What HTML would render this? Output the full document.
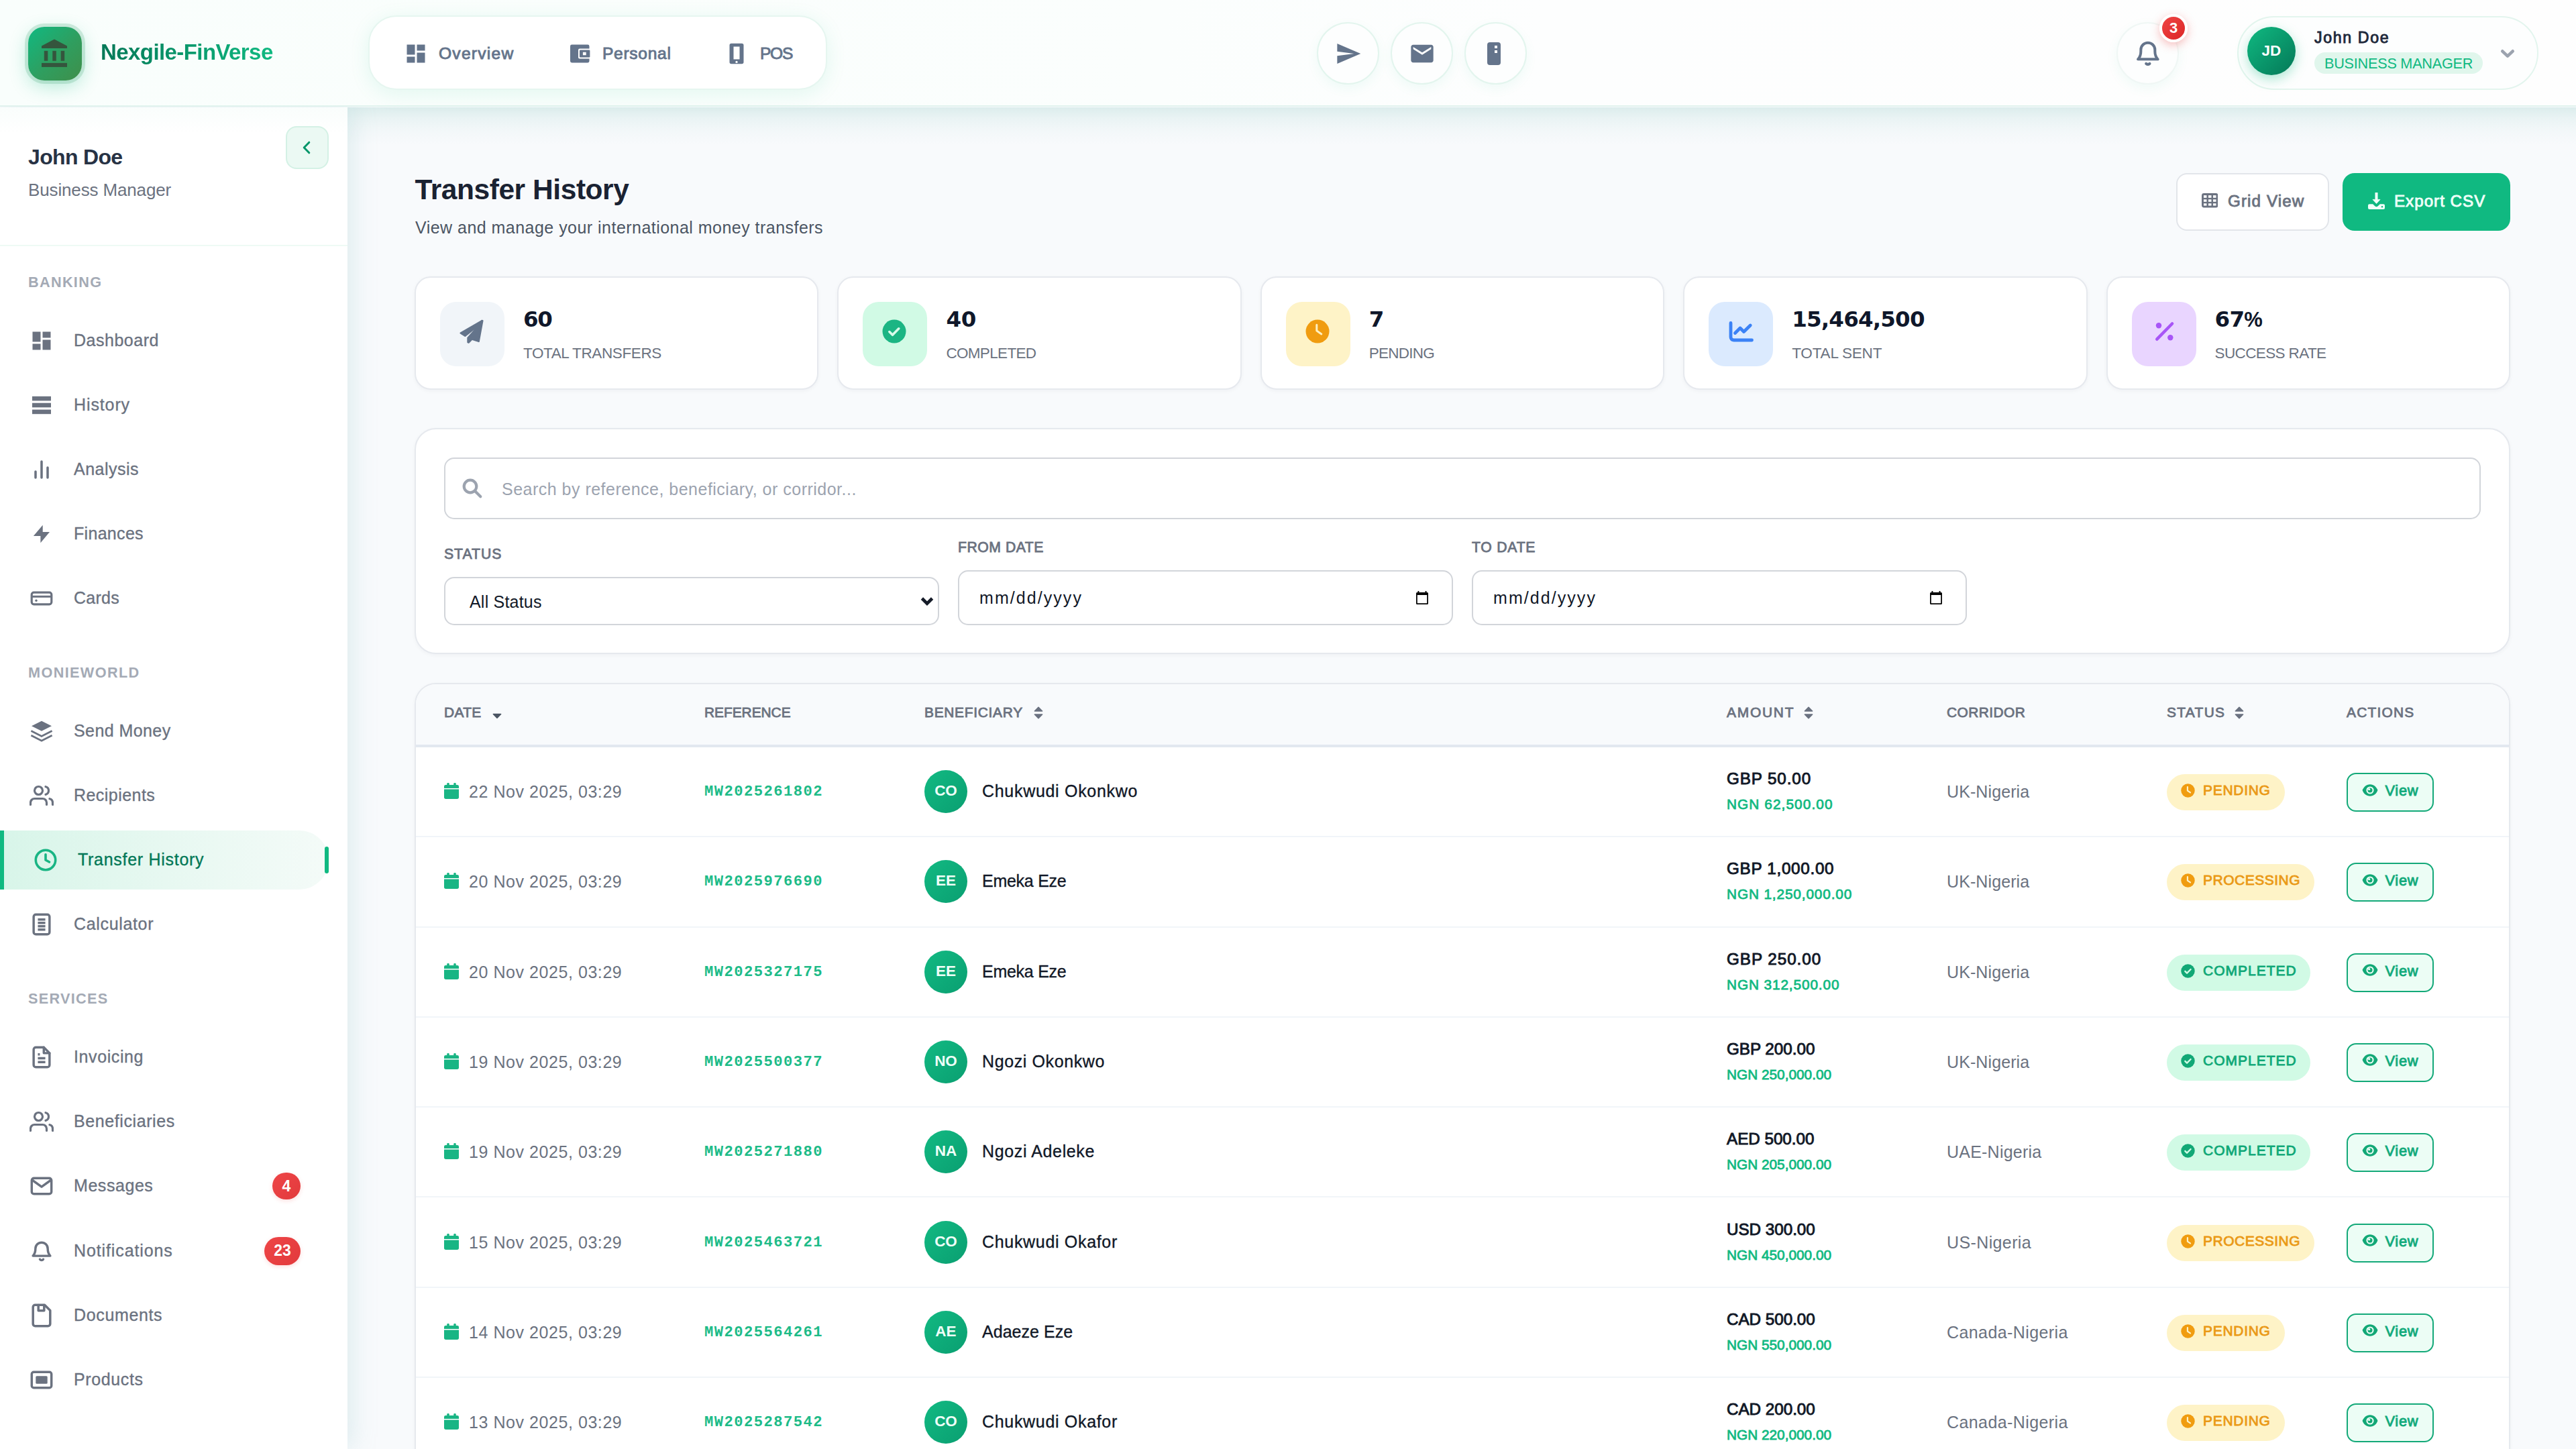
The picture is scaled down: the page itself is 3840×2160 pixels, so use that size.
<!DOCTYPE html>
<html lang="en">
<head>
<meta charset="utf-8">
<title>Transfer History - Nexgile-FinVerse</title>
<style>
*{box-sizing:border-box;margin:0;padding:0}
html,body{width:3840px;height:2160px;overflow:hidden}
body{font-family:"Liberation Sans",sans-serif;background:#f8fafc;color:#111827;position:relative}
svg{display:block}
.abs{position:absolute}
/* ---------- header ---------- */
#hdr{position:absolute;left:0;top:0;width:3840px;height:159px;background:linear-gradient(90deg,#f9fefc 0%,#fbfefd 45%,#fdfefe 60%,#fefefe 100%);border-bottom:2px solid #e1f3ee;z-index:5}
#hsh{position:absolute;left:518px;top:160px;width:3322px;height:56px;background:linear-gradient(180deg,rgba(120,190,180,.22) 0%,rgba(120,190,180,.11) 30%,rgba(120,190,180,.04) 65%,rgba(120,190,180,0) 100%);z-index:1}
#logo{position:absolute;left:42px;top:40px;width:80px;height:80px;border-radius:24px;background:linear-gradient(135deg,#10b981 0%,#2f9e5f 55%,#3f8f4a 100%);box-shadow:0 0 0 5px rgba(60,160,110,.20),0 8px 28px rgba(16,185,129,.30)}
#brand{position:absolute;left:150px;top:56px;font-weight:700;font-size:33px;line-height:44px;white-space:nowrap;background:linear-gradient(90deg,#047857,#10b981);-webkit-background-clip:text;background-clip:text;color:transparent}
#pill{position:absolute;left:549px;top:23px;width:684px;height:111px;border-radius:42px;background:#fff;border:2px solid #e6f6f0;box-shadow:0 6px 30px rgba(16,185,129,.10)}
.tn{position:absolute;top:1px;height:107px;display:flex;align-items:center;font-weight:400;-webkit-text-stroke:.9px currentColor;font-size:24.6px;color:#64748b;white-space:nowrap}
.hc{position:absolute;top:33px;width:93px;height:93px;border-radius:50%;background:#fdfefe;border:2px solid #e3f5ee;box-shadow:0 6px 18px rgba(16,185,129,.06)}
.hc svg{position:absolute}
#upill{position:absolute;left:3335px;top:24px;width:449px;height:110px;border-radius:55px;background:#fdfefe;border:2px solid #e3f5ee}
#uav{position:absolute;left:3350px;top:40px;width:72px;height:72px;border-radius:50%;background:linear-gradient(135deg,#10b981,#047857);box-shadow:0 6px 18px rgba(16,185,129,.35);color:#fff;font-weight:700;font-size:22.5px;display:flex;align-items:center;justify-content:center}
#uname{position:absolute;left:3450px;top:39px;font-size:23.2px;line-height:34px;font-weight:400;-webkit-text-stroke:.9px currentColor;color:#1e293b;white-space:nowrap}
#urole{position:absolute;left:3450px;top:78px;height:32px;border-radius:16px;background:#e0f6ec;color:#10b981;font-size:21.7px;line-height:33.5px;padding:0 15px;white-space:nowrap}
/* ---------- sidebar ---------- */
#side{position:absolute;left:0;top:160px;width:518px;height:2000px;background:#fff;z-index:3;box-shadow:4px 0 36px rgba(130,190,195,.26)}
#side:before{content:"";position:absolute;left:0;top:0;width:100%;height:40px;background:linear-gradient(180deg,rgba(16,185,129,.025),rgba(255,255,255,0))}
#sname{position:absolute;left:42px;top:54px;font-size:32px;line-height:40px;font-weight:700;color:#273244;white-space:nowrap}
#srole{position:absolute;left:42px;top:106px;font-size:26px;line-height:34px;color:#6b7280;white-space:nowrap}
#coll{position:absolute;left:426px;top:28px;width:64px;height:64px;border-radius:16px;background:#ebf9f3;border:2px solid #d4f1e5}
#sdiv{position:absolute;left:0;top:205px;width:518px;height:2px;background:#eefaf5}
.sl{position:absolute;left:42px;font-size:21.7px;line-height:30px;font-weight:700;color:#a4aab5;letter-spacing:2.2px;white-space:nowrap}
.ni{position:absolute;left:0;width:490px;height:88px;display:flex;align-items:center;font-size:25px;color:#6b7280;white-space:nowrap}
.ni .ic{position:absolute;left:42px;top:24px;width:40px;height:40px}
.ni .tx{position:absolute;left:110px;top:-1px;-webkit-text-stroke:.35px currentColor;line-height:88px}
.ni.act{background:linear-gradient(90deg,#d8f5e9 0%,#e7f8f1 50%,#f4fbf8 100%);border-left:6px solid #10b981;border-radius:0 46px 46px 0;color:#047857}
.ni.act:after{content:"";position:absolute;right:0;top:24px;width:6px;height:40px;border-radius:3px;background:#10b981}
.bdg{position:absolute;height:42px;border-radius:21px;background:linear-gradient(135deg,#ee4547,#e23a3c);color:#fff;font-weight:700;font-size:23px;line-height:40px;text-align:center;box-shadow:0 2px 6px rgba(239,68,68,.18)}
/* ---------- main ---------- */
#ttl{position:absolute;left:618.5px;top:254.5px;font-size:42.5px;line-height:56px;font-weight:700;color:#1a2232;white-space:nowrap}
#sub{position:absolute;left:619px;top:322px;font-size:25px;line-height:34px;color:#4b5563;white-space:nowrap}
.btn{position:absolute;top:258px;height:86px;border-radius:16px;font-size:24.2px;font-weight:400;-webkit-text-stroke:.9px currentColor;white-space:nowrap}
.btn span{position:absolute;top:0;line-height:84px}
.btn svg{position:absolute}
.card{position:absolute;background:#fff;border:2px solid #e6e9ee;box-shadow:0 2px 6px rgba(15,23,42,.04)}
.st{top:412px;width:602.4px;height:169px;border-radius:24px}
.st .ib{position:absolute;left:36px;top:36px;width:96px;height:96px;border-radius:24px}
.st .ib svg{position:absolute}
.st .nm{position:absolute;left:160px;top:40px;font-family:"DejaVu Sans","Liberation Sans",sans-serif;font-size:32.5px;line-height:44px;font-weight:700;color:#0f172a;white-space:nowrap}
.st .lb{position:absolute;left:160px;top:98px;font-size:22.5px;line-height:30px;color:#6b7280;white-space:nowrap}
.fld{position:absolute;background:#fff;border:2px solid #d2d5da;border-radius:15px}
.fl{position:absolute;font-size:21.2px;line-height:28px;font-weight:400;-webkit-text-stroke:.85px currentColor;color:#6b7280;white-space:nowrap}
.ft{position:absolute;white-space:nowrap;color:#111827}
/* ---------- table ---------- */
#tbl{left:618px;top:1018px;width:3124px;height:1200px;border-radius:32px 32px 0 0;overflow:hidden}
#th{position:absolute;left:0;top:0;width:100%;height:94px;background:#f8fafc;border-bottom:4px solid #e2e8f0}
.h{position:absolute;top:27px;font-size:20.9px;line-height:30px;font-weight:400;-webkit-text-stroke:.85px currentColor;color:#6b7280;white-space:nowrap}
.h svg{position:absolute;top:6px}
.r{position:absolute;left:0;width:100%;height:134.3px;border-bottom:2px solid #f1f5f9}
.r>*{position:absolute;white-space:nowrap}
.dt{left:79px;top:48px;font-size:25px;line-height:36px;color:#6b7280}
.cal{left:42px;top:53px}
.rf{left:430px;top:50px;font-family:"Liberation Mono",monospace;font-weight:700;font-size:22.2px;line-height:33px;color:#1dbb88}
.av{left:758px;top:34px;width:64px;height:64px;border-radius:50%;background:linear-gradient(135deg,#12b982,#0a9f71);color:#effff8;font-weight:700;font-size:22.5px;line-height:61.5px;text-align:center}
.bn{left:844px;top:47px;-webkit-text-stroke:.35px currentColor;font-size:25px;line-height:36px;color:#111827}
.a1{left:1954px;top:30px;font-size:24.2px;line-height:34px;font-weight:400;-webkit-text-stroke:.95px currentColor;color:#111827}
.a2{left:1954px;top:70px;font-size:20.8px;line-height:30px;font-weight:400;-webkit-text-stroke:.8px currentColor;color:#10b981}
.co{left:2282px;top:48px;font-size:25px;line-height:36px;color:#6b7280}
.sp{left:2610px;top:40px;height:54px;border-radius:27px;font-size:21px;font-weight:400;-webkit-text-stroke:.85px currentColor;line-height:52px}
.sp svg{position:absolute;left:21px;top:14px}
.sp span{position:absolute;left:54px;top:-2px}
.sp.pe{background:#fef3c7;color:#ea9916}
.sp.cm{background:#d1fae5;color:#10a877}
.vb{left:2878px;top:38px;width:130px;height:58px;border:2.5px solid #14a979;border-radius:14px;background:#ecfdf5;color:#12aa7b;font-weight:400;-webkit-text-stroke:.9px currentColor;font-size:21.8px}
.vb svg{position:absolute;left:20.5px;top:13.5px}
.vb span{position:absolute;left:55.5px;top:0;line-height:49px}
</style>
<style>
#s5n{letter-spacing:-0.8px}
#r6 .sp span{letter-spacing:0.51px}
.sp.cm span{letter-spacing:0.99px}
#r3 .bn{letter-spacing:-0.27px}
#r8 .bn{letter-spacing:0.68px}
#r2 .co{letter-spacing:0.1px}
#r3 .co{letter-spacing:0.1px}
#r4 .co{letter-spacing:0.1px}
#r8 .co{letter-spacing:0.41px}
.dt{letter-spacing:0.56px}
.rf{letter-spacing:1.43px}
#brand{letter-spacing:-0.58px}
#t1{letter-spacing:1.24px}
#t2{letter-spacing:0.69px}
#t3{letter-spacing:-1.32px}
#uname{letter-spacing:1.62px}
#urole{letter-spacing:-0.26px}
#sname{letter-spacing:-0.66px}
#srole{letter-spacing:-0.14px}
#sl1{letter-spacing:1.3px}
#sl2{letter-spacing:1.35px}
#sl3{letter-spacing:1.27px}
#ttl{letter-spacing:-0.44px}
#sub{letter-spacing:0.47px}
#bg span{letter-spacing:1.11px}
#be span{letter-spacing:0.99px}
#ph{letter-spacing:0.49px}
#l1{letter-spacing:0.99px}
#l2{letter-spacing:0.53px}
#l3{letter-spacing:0.77px}
#sel{letter-spacing:0.2px}
#d1{letter-spacing:2.06px}
#d2{letter-spacing:2.06px}
#h1{letter-spacing:0.34px}
#h2{letter-spacing:-0.03px}
#n1{letter-spacing:0.51px}
#n2{letter-spacing:0.89px}
#n3{letter-spacing:0.5px}
#n4{letter-spacing:0.31px}
#n5{letter-spacing:0.25px}
#n6{letter-spacing:0.42px}
#n7{letter-spacing:0.45px}
#n8{letter-spacing:0.71px}
#n9{letter-spacing:0.66px}
#n10{letter-spacing:0.6px}
#n11{letter-spacing:0.59px}
#n12{letter-spacing:0.56px}
#n13{letter-spacing:0.89px}
#n14{letter-spacing:0.64px}
#n15{letter-spacing:0.62px}
#s1n{letter-spacing:-1.24px}
#s1l{letter-spacing:-0.39px}
#s2n{letter-spacing:-0.13px}
#s2l{letter-spacing:-0.67px}
#s3l{letter-spacing:-0.77px}
#s4n{letter-spacing:-0.81px}
#s4l{letter-spacing:-0.18px}
#s5l{letter-spacing:-0.63px}
#r1 .dt{letter-spacing:0.56px}
#r1 .rf{letter-spacing:1.43px}
#r1 .bn{letter-spacing:0.7px}
#r1 .a1{letter-spacing:0.91px}
#r1 .a2{letter-spacing:1.08px}
#r1 .co{letter-spacing:0.1px}
#r2 .bn{letter-spacing:-0.27px}
#r2 .a1{letter-spacing:0.73px}
#r2 .a2{letter-spacing:0.86px}
#r3 .a1{letter-spacing:0.98px}
#r3 .a2{letter-spacing:0.88px}
#r4 .bn{letter-spacing:0.61px}
#r5 .bn{letter-spacing:0.63px}
#r6 .bn{letter-spacing:0.68px}
#r7 .bn{letter-spacing:0.04px}
#r5 .co{letter-spacing:0.22px}
#r6 .co{letter-spacing:0.38px}
#r7 .co{letter-spacing:0.41px}
.sp.pe span{letter-spacing:0.7px}
.vb span{letter-spacing:0.71px}
#h3{letter-spacing:0.72px}
#h4{letter-spacing:1.78px}
#h5{letter-spacing:0.44px}
#h6{letter-spacing:1.34px}
#h7{letter-spacing:1.24px}
#r2 .sp span{letter-spacing:0.51px}
#r3 .sp span{letter-spacing:0.99px}
</style>
</head>
<body>
<div id="hdr">
  <div id="logo"><svg class="abs" style="left:0;top:0" width="80" height="80" viewBox="0 0 80 80" fill="#35553d"><path d="M39 18.400 58 28.500V32H20V28.500z"/><rect x="23.800" y="35.800" width="5.500" height="14.900"/><rect x="36.300" y="35.800" width="5.500" height="14.900"/><rect x="48.700" y="35.800" width="5.500" height="14.900"/><rect x="20" y="53.900" width="38" height="6"/></svg></div>
  <div id="brand">Nexgile-FinVerse</div>
  <div id="pill">
    <svg class="abs" style="left:51px;top:37px" width="36" height="36" viewBox="0 0 24 24" fill="#64748b"><path d="M3 13h8V3H3zm0 8h8v-6H3zm10 0h8V11h-8zm0-18v6h8V3z"/></svg>
    <div class="tn" id="t1" style="left:103px">Overview</div>
    <svg class="abs" style="left:296px;top:37px" width="36" height="36" viewBox="0 0 24 24"><path fill="#64748b" d="M3.6 3h15.8A1.6 1.6 0 0 1 21 4.6v14.8a1.6 1.6 0 0 1-1.600 1.600H3.600A1.600 1.600 0 0 1 2 19.400V4.600A1.600 1.600 0 0 1 3.600 3z"/><rect x="10" y="7" width="14" height="10" rx="1.4" fill="#fff"/><rect x="11.3" y="8.3" width="10.3" height="7.4" rx=".8" fill="#64748b"/><rect x="14.600" y="10.500" width="3.200" height="3" fill="#fff"/></svg>
    <div class="tn" id="t2" style="left:347px">Personal</div>
    <svg class="abs" style="left:529px;top:37px" width="36" height="36" viewBox="0 0 24 24"><rect x="5" y="1.800" width="14" height="20.400" rx="1.800" fill="#64748b"/><rect x="9" y="5" width="6" height="12.600" fill="#fff"/><circle cx="12" cy="20.300" r="1.100" fill="#fff"/></svg>
    <div class="tn" id="t3" style="left:582px">POS</div>
  </div>
  <div class="hc" style="left:1963px"><svg style="left:25px;top:25px" width="40" height="40" viewBox="0 0 24 24" fill="#64748b"><path d="M2.010 21 23 12 2.010 3 2 10l15 2-15 2z"/></svg></div>
  <div class="hc" style="left:2073px"><svg style="left:25px;top:25px" width="40" height="40" viewBox="0 0 24 24" fill="#64748b"><path d="M20 4H4c-1.100 0-1.990.9-1.990 2L2 18c0 1.100.9 2 2 2h16c1.100 0 2-.9 2-2V6c0-1.100-.9-2-2-2zm0 4-8 5-8-5V6l8 5 8-5z"/></svg></div>
  <div class="hc" style="left:2183px"><svg style="left:32px;top:28px" width="22" height="36" viewBox="0 0 22 36"><rect x="0" y="0" width="20" height="34" rx="4" fill="#64748b"/><rect x="11" y="5" width="4" height="4" fill="#fff"/><rect x="11" y="12" width="4" height="4" fill="#fff"/></svg></div>
  <div class="hc" style="left:3155px;border-color:#f0f7f5"><svg style="left:24px;top:25px" width="40" height="40" viewBox="0 0 24 24" fill="none" stroke="#64748b" stroke-width="2.400" stroke-linejoin="round" stroke-linecap="round"><path d="M3.600 17C5.400 15.200 6.200 13.500 6.200 9.900V8.500a6.300 6.300 0 0 1 12.600 0v1.400c0 3.600.8 5.300 2.600 7.100z"/><path d="M10.900 20.900q1.600 1.300 3.200 0"/></svg></div>
  <div class="abs" id="nb" style="left:3219px;top:21px;width:42px;height:42px;border-radius:50%;background:linear-gradient(135deg,#ef4444,#dc2626);border:4px solid #fff;box-shadow:0 4px 14px rgba(239,68,68,.35);color:#fff;font-weight:700;font-size:22px;line-height:34px;text-align:center">3</div>
  <div id="upill"></div>
  <div id="uav">JD</div>
  <div id="uname">John Doe</div>
  <div id="urole">BUSINESS MANAGER</div>
  <svg class="abs" style="left:3724px;top:66px" width="28" height="28" viewBox="0 0 28 28" fill="none" stroke="#9ca3af" stroke-width="4.600" stroke-linecap="round" stroke-linejoin="round"><path d="M6.300 10.300 14 17.700l7.700-7.400"/></svg>
</div>
<div id="hsh"></div>
<div id="side">
<div id="sname">John Doe</div><div id="srole">Business Manager</div>
<div id="coll"><svg class="abs" style="left:16px;top:16px" width="28" height="28" viewBox="0 0 28 28" fill="none" stroke="#059669" stroke-width="3" stroke-linecap="round" stroke-linejoin="round"><path d="M16.800 6.200 9.200 14l7.600 7.800"/></svg></div>
<div id="sdiv"></div>
<div class="sl" id="sl1" style="top:246.4px">BANKING</div>
<div class="ni" style="top:304px"><svg class="abs" style="left:44px;top:26px" width="36" height="36" viewBox="0 0 24 24" fill="#6b7280"><path d="M3 13h8V3H3zm0 8h8v-6H3zm10 0h8V11h-8zm0-18v6h8V3z"/></svg><div class="tx" id="n1">Dashboard</div></div>
<div class="ni" style="top:400px"><svg class="abs" style="left:48px;top:30px" width="28" height="28" viewBox="0 0 28 28" fill="#6b7280"><rect x="0" y="0.800" width="28" height="6.600"/><rect x="0" y="10.700" width="28" height="6.600"/><rect x="0" y="20.600" width="28" height="6.600"/></svg><div class="tx" id="n2">History</div></div>
<div class="ni" style="top:496px"><svg class="abs" style="left:44px;top:26px" width="36" height="36" viewBox="0 0 24 24" fill="none" stroke="#6b7280" stroke-width="2.35" stroke-linecap="round" stroke-linejoin="round"><path d="M6 20v-6M12 20V4M18 20V10"/></svg><div class="tx" id="n3">Analysis</div></div>
<div class="ni" style="top:592px"><svg class="abs" style="left:49px;top:30px" width="26" height="28" viewBox="0 0 26 28" fill="#6b7280"><path d="M14.700 .7.9 16.900H11.400V27.200L25 11H14.700z"/></svg><div class="tx" id="n4">Finances</div></div>
<div class="ni" style="top:688px"><svg class="abs" style="left:44px;top:32px" width="36" height="24" viewBox="0 0 36 24" ><rect x="3.200" y="3.200" width="29.600" height="17.600" rx="3.200" fill="none" stroke="#6b7280" stroke-width="3.200"/><path d="M3 9.300h30" stroke="#6b7280" stroke-width="3"/><circle cx="10" cy="15.300" r="1.700" fill="#6b7280"/></svg><div class="tx" id="n5">Cards</div></div>
<div class="sl" id="sl2" style="top:827.7px">MONIEWORLD</div>
<div class="ni" style="top:886px"><svg class="abs" style="left:44px;top:26px" width="36" height="36" viewBox="0 0 24 24" ><path d="M12 1.900 22 6.900 12 11.900 2 6.900z" fill="#6b7280"/><path d="M1.600 11.700 12 17l10.400-5.300M1.600 16.200 12 21.500l10.400-5.300" fill="none" stroke="#6b7280" stroke-width="1.800"/></svg><div class="tx" id="n6">Send Money</div></div>
<div class="ni" style="top:982px"><svg class="abs" style="left:44px;top:26px" width="36" height="36" viewBox="0 0 24 24" fill="none" stroke="#6b7280" stroke-width="2.15" stroke-linecap="round" stroke-linejoin="round"><path d="M17 21v-2a4 4 0 0 0-4-4H5a4 4 0 0 0-4 4v2"/><circle cx="9" cy="7" r="4"/><path d="M23 21v-2a4 4 0 0 0-3-3.870"/><path d="M16 3.130a4 4 0 0 1 0 7.750"/></svg><div class="tx" id="n7">Recipients</div></div>
<div class="ni act" style="top:1078px"><svg class="abs" style="left:44px;top:26px" width="36" height="36" viewBox="0 0 24 24" fill="none" stroke="#19b584" stroke-width="2.4" stroke-linecap="round" stroke-linejoin="round"><circle cx="12" cy="12" r="9.800"/><path d="M12 6.500V12l3.700 2"/></svg><div class="tx" id="n8">Transfer History</div></div>
<div class="ni" style="top:1174px"><svg class="abs" style="left:44px;top:26px" width="36" height="36" viewBox="0 0 24 24" fill="none" stroke="#6b7280" stroke-width="2.3" stroke-linecap="round" stroke-linejoin="round"><rect x="4.100" y="2.200" width="15.800" height="19.600" rx="2.200"/><path d="M8.300 7.200h7.400M8.300 10.500h7.400M8.300 13.800h7.400M8.300 17.100h7.400" stroke-linecap="butt"/></svg><div class="tx" id="n9">Calculator</div></div>
<div class="sl" id="sl3" style="top:1314.0px">SERVICES</div>
<div class="ni" style="top:1372px"><svg class="abs" style="left:44px;top:26px" width="36" height="36" viewBox="0 0 24 24" fill="none" stroke="#6b7280" stroke-width="2.3" stroke-linecap="round" stroke-linejoin="round"><path d="M14.200 2.200H6.300a2.200 2.200 0 0 0-2.200 2.200v15.200a2.200 2.200 0 0 0 2.200 2.200h11.400a2.200 2.200 0 0 0 2.200-2.200V7.900z"/><path d="M14.200 2.200v5.700h5.700" /><path d="M8.300 9.200h2M8.300 13h7.400M8.300 16.800h7.400" stroke-linecap="butt"/></svg><div class="tx" id="n10">Invoicing</div></div>
<div class="ni" style="top:1468px"><svg class="abs" style="left:44px;top:26px" width="36" height="36" viewBox="0 0 24 24" fill="none" stroke="#6b7280" stroke-width="2.15" stroke-linecap="round" stroke-linejoin="round"><path d="M17 21v-2a4 4 0 0 0-4-4H5a4 4 0 0 0-4 4v2"/><circle cx="9" cy="7" r="4"/><path d="M23 21v-2a4 4 0 0 0-3-3.870"/><path d="M16 3.130a4 4 0 0 1 0 7.750"/></svg><div class="tx" id="n11">Beneficiaries</div></div>
<div class="ni" style="top:1564px"><svg class="abs" style="left:44px;top:26px" width="36" height="36" viewBox="0 0 24 24" fill="none" stroke="#6b7280" stroke-width="2.3" stroke-linecap="round" stroke-linejoin="round"><rect x="2.200" y="4.200" width="19.600" height="15.600" rx="2.200"/><path d="M2.600 6 12 12.800 21.400 6"/></svg><div class="tx" id="n12">Messages</div><div class="bdg" style="left:406px;top:24px;width:42px;height:40px;line-height:40px">4</div></div>
<div class="ni" style="top:1660.6px"><svg class="abs" style="left:44px;top:25px" width="36" height="36" viewBox="0 0 24 24" fill="none" stroke="#6b7280" stroke-width="2.3" stroke-linecap="round" stroke-linejoin="round"><path d="M3.400 17.400C5.200 15.500 5.900 13.800 5.900 10.200a6.100 6.100 0 0 1 12.200 0c0 3.600.7 5.300 2.500 7.200z"/><path d="M10.300 20.800a2 2 0 0 0 3.400 0"/></svg><div class="tx" id="n13">Notifications</div><div class="bdg" style="left:394px;top:23px;width:54px;height:42px;line-height:41px">23</div></div>
<div class="ni" style="top:1756.7px"><svg class="abs" style="left:44px;top:25px" width="36" height="38" viewBox="0 0 36 38" fill="none" stroke="#6b7280" stroke-width="3.5" stroke-linecap="round" stroke-linejoin="round"><path d="M22.500 3.200H8.400a3.200 3.200 0 0 0-3.200 3.200v25.200a3.200 3.200 0 0 0 3.200 3.200h19.200a3.200 3.200 0 0 0 3.200-3.200V11.500z"/><path d="M13.200 3.500v8.300h8.600V3.500"/></svg><div class="tx" id="n14">Documents</div></div>
<div class="ni" style="top:1852.8px"><svg class="abs" style="left:44px;top:29px" width="36" height="30" viewBox="0 0 36 30" ><rect x="3.300" y="3.300" width="29.400" height="23.400" rx="3" fill="none" stroke="#6b7280" stroke-width="3.500"/><rect x="9.300" y="9.300" width="17.400" height="11.400" rx="1.500" fill="#6b7280"/></svg><div class="tx" id="n15">Products</div></div>
</div>
<div id="ttl">Transfer History</div>
<div id="sub">View and manage your international money transfers</div>
<div class="btn" id="bg" style="left:3244px;width:228px;background:#fff;border:2px solid #e2e5ea;color:#6b7280">
  <svg style="left:35.500px;top:28px" width="24.500" height="21.500" viewBox="0 0 25 22"><rect x="0" y="0" width="25" height="22" rx="3.500" fill="#6b7280"/><g fill="#fff"><rect x="3" y="3.200" width="4.600" height="3.800"/><rect x="10.200" y="3.200" width="4.600" height="3.800"/><rect x="17.400" y="3.200" width="4.600" height="3.800"/><rect x="3" y="9.500" width="4.600" height="3.600"/><rect x="10.200" y="9.500" width="4.600" height="3.600"/><rect x="17.400" y="9.500" width="4.600" height="3.600"/><rect x="3" y="15.600" width="4.600" height="3.400"/><rect x="10.200" y="15.600" width="4.600" height="3.400"/><rect x="17.400" y="15.600" width="4.600" height="3.400"/></g></svg>
  <span style="left:75px;top:-2px">Grid View</span>
</div>
<div class="btn" id="be" style="left:3492px;width:250px;background:#10b981;color:#eefff8;border-radius:18px">
  <svg style="left:38px;top:28.500px" width="25" height="25" viewBox="0 0 25 25" fill="#f0fff9"><path d="M10.900 .4a1.600 1.600 0 0 1 3.200 0v10h3.900L12.500 16.400 7 10.400h3.900z" stroke="#f0fff9" stroke-width=".8" stroke-linejoin="round"/><path d="M2 17.200h5.200l3.100 3a3.100 3.100 0 0 0 4.400 0l3.100-3H23a2 2 0 0 1 2 2V23a2 2 0 0 1-2 2H2a2 2 0 0 1-2-2v-3.800a2 2 0 0 1 2-2z"/><circle cx="21" cy="21.300" r="1.200" fill="#10b981"/></svg>
  <span style="left:77px">Export CSV</span>
</div>

<div class="card st" style="left:618px"><div class="ib" style="background:#f1f5f9"><svg style="left:0;top:0" width="96" height="96" viewBox="0 0 96 96" fill="#64748b" stroke="#64748b" stroke-width="2.400" stroke-linejoin="round"><path d="M62.600 28 30.600 46.500 37.300 50.800 51 40z"/><path d="M62.600 28 50.500 40.200 53.600 40.600z"/><path d="M63.300 28.200 53.400 40.300 41.500 53.600V60.200L42.600 60.700 47.500 55.600 57.700 58.900z"/></svg></div><div class="nm" id="s1n">60</div><div class="lb" id="s1l">TOTAL TRANSFERS</div></div>
<div class="card st" style="left:1248.400px"><div class="ib" style="background:#d1fae5"><svg style="left:29px;top:26px" width="36" height="36" viewBox="0 0 36 36"><circle cx="18" cy="18" r="17.500" fill="#1bb583"/><path d="M10.800 18.600l4.700 4.700 9.300-9.500" fill="none" stroke="#d9fbea" stroke-width="3.600" stroke-linecap="round" stroke-linejoin="round"/></svg></div><div class="nm" id="s2n">40</div><div class="lb" id="s2l">COMPLETED</div></div>
<div class="card st" style="left:1878.800px"><div class="ib" style="background:#fef3c7"><svg style="left:29px;top:26px" width="36" height="36" viewBox="0 0 36 36"><circle cx="18" cy="18" r="17.500" fill="#f09c10"/><path d="M16.800 8.300v8.800l7 4.800" fill="none" stroke="#fef0c0" stroke-width="3" stroke-linecap="round" stroke-linejoin="round"/></svg></div><div class="nm" id="s3n">7</div><div class="lb" id="s3l">PENDING</div></div>
<div class="card st" style="left:2509.200px"><div class="ib" style="background:#dbeafe"><svg style="left:0;top:0" width="96" height="96" viewBox="0 0 96 96" fill="none" stroke="#3b82f6" stroke-width="4.800" stroke-linecap="round" stroke-linejoin="round"><path d="M33 31.500v21a4.500 4.500 0 0 0 4.500 4.500h27"/><path d="M39.500 46.500 47 39l5.500 5.500 9.700-9.500"/></svg></div><div class="nm" id="s4n">15,464,500</div><div class="lb" id="s4l">TOTAL SENT</div></div>
<div class="card st" style="left:3139.600px"><div class="ib" style="background:#e9d5ff"><svg style="left:0;top:0" width="96" height="96" viewBox="0 0 96 96"><path d="M37.300 55.700 60 32.500" stroke="#a855f7" stroke-width="4.600" stroke-linecap="round"/><circle cx="40" cy="35.300" r="4.200" fill="#a855f7"/><circle cx="57.300" cy="53.300" r="4.200" fill="#a855f7"/></svg></div><div class="nm" id="s5n">67<span style="font-family:'Liberation Sans',sans-serif;font-size:31px;letter-spacing:0">%</span></div><div class="lb" id="s5l">SUCCESS RATE</div></div>

<div class="card" style="left:618px;top:638px;width:3124px;height:337px;border-radius:32px"></div>
<div class="fld" style="left:662px;top:682px;width:3036px;height:92px"></div>
<svg class="abs" style="left:688px;top:712px" width="32" height="32" viewBox="0 0 32 32" fill="none" stroke="#9ca3af" stroke-width="4.200" stroke-linecap="round"><circle cx="13" cy="13" r="9.300"/><path d="M20 20l8.300 8.300"/></svg>
<div class="ft" id="ph" style="left:748px;top:711px;font-size:25px;line-height:36px;color:#9ca3af">Search by reference, beneficiary, or corridor...</div>
<div class="fl" id="l1" style="left:662px;top:812px">STATUS</div>
<div class="fl" id="l2" style="left:1428px;top:802px">FROM DATE</div>
<div class="fl" id="l3" style="left:2194px;top:802px">TO DATE</div>
<div class="fld" style="left:662px;top:860px;width:738px;height:72px;border-radius:15px"></div>
<div class="ft" id="sel" style="left:700px;top:879px;font-size:25px;line-height:36px">All Status</div>
<svg class="abs" style="left:1368px;top:884px" width="28" height="24" viewBox="0 0 28 24" fill="none" stroke="#151b28" stroke-width="4.700"><path d="M6.400 8 14 15.600 21.600 8"/></svg>
<div class="fld" style="left:1428px;top:850px;width:738px;height:82px"></div>
<div class="ft dd" id="d1" style="left:1460px;top:873px;font-size:25px;line-height:36px">mm/dd/yyyy</div>
<svg class="abs" style="left:2111px;top:881px" width="18" height="20" viewBox="0 0 18 20"><path d="M2.500 0h1.900v2.100h9.200V0h1.900v2.100H16.500A1.500 1.500 0 0 1 18 3.600v14.900a1.500 1.500 0 0 1-1.500 1.500h-15A1.500 1.500 0 0 1 0 18.500V3.600a1.500 1.500 0 0 1 1.500-1.500H2.500zM1.800 6v12.200h14.400V6z" fill="#050505"/></svg>
<div class="fld" style="left:2194px;top:850px;width:738px;height:82px"></div>
<div class="ft dd" id="d2" style="left:2226px;top:873px;font-size:25px;line-height:36px">mm/dd/yyyy</div>
<svg class="abs" style="left:2877px;top:881px" width="18" height="20" viewBox="0 0 18 20"><path d="M2.500 0h1.900v2.100h9.200V0h1.900v2.100H16.500A1.500 1.500 0 0 1 18 3.600v14.900a1.500 1.500 0 0 1-1.500 1.500h-15A1.500 1.500 0 0 1 0 18.500V3.600a1.500 1.500 0 0 1 1.500-1.500H2.500zM1.800 6v12.200h14.400V6z" fill="#050505"/></svg>
<div class="card" id="tbl"><div id="th">
<div class="h" id="h1" style="left:42px">DATE<svg style="left:72px;top:15.500px" width="14" height="9" viewBox="0 0 14 9" fill="#4b5563" stroke="#4b5563" stroke-width="1.600" stroke-linejoin="round"><path d="M7 7.200 12.600 1.500H1.400z"/></svg></div>
<div class="h" id="h2" style="left:430px">REFERENCE</div>
<div class="h" id="h3" style="left:758px">BENEFICIARY<svg style="left:163px;top:6px" width="14" height="19" viewBox="0 0 14 19" fill="#6b7280" stroke="#6b7280" stroke-width="1.600" stroke-linejoin="round"><path d="M7 1.300 12.600 7H1.400z"/><path d="M7 17.700 12.600 12H1.400z"/></svg></div>
<div class="h" id="h4" style="left:1954px">AMOUNT<svg style="left:115px;top:6px" width="14" height="19" viewBox="0 0 14 19" fill="#6b7280" stroke="#6b7280" stroke-width="1.600" stroke-linejoin="round"><path d="M7 1.300 12.600 7H1.400z"/><path d="M7 17.700 12.600 12H1.400z"/></svg></div>
<div class="h" id="h5" style="left:2282px">CORRIDOR</div>
<div class="h" id="h6" style="left:2610px">STATUS<svg style="left:101px;top:6px" width="14" height="19" viewBox="0 0 14 19" fill="#6b7280" stroke="#6b7280" stroke-width="1.600" stroke-linejoin="round"><path d="M7 1.300 12.600 7H1.400z"/><path d="M7 17.700 12.600 12H1.400z"/></svg></div>
<div class="h" id="h7" style="left:2878px">ACTIONS</div>
</div>
<div class="r" id="r1" style="top:94.00px"><svg class="cal" width="22" height="24" preserveAspectRatio="none" viewBox="0 0 22 25" fill="#19b584"><rect x="4.300" y="0" width="3.400" height="6" rx="1.200"/><rect x="14.300" y="0" width="3.400" height="6" rx="1.200"/><path d="M2.600 3h16.800A2.600 2.600 0 0 1 22 5.600V8.300H0V5.600A2.600 2.600 0 0 1 2.600 3z"/><path d="M0 10h22v12.400a2.600 2.600 0 0 1-2.600 2.600H2.600A2.600 2.600 0 0 1 0 22.400z"/></svg><div class="dt">22 Nov 2025, 03:29</div><div class="rf">MW2025261802</div><div class="av">CO</div><div class="bn">Chukwudi Okonkwo</div><div class="a1">GBP 50.00</div><div class="a2">NGN 62,500.00</div><div class="co">UK-Nigeria</div><div class="sp pe" style="width:176px"><svg width="21" height="21" viewBox="0 0 22 22"><circle cx="11" cy="11" r="10.700" fill="#f09c10"/><path d="M10.400 5.300v5.900l4.300 2.900" fill="none" stroke="#fef3c7" stroke-width="2.300" stroke-linecap="round" stroke-linejoin="round"/></svg><span>PENDING</span></div><div class="vb"><svg width="24" height="20" viewBox="0 0 24 20"><path d="M12 1.200C6.500 1.200 2.300 5.200.6 10c1.700 4.800 5.900 8.800 11.400 8.800s9.700-4 11.400-8.800C21.700 5.200 17.500 1.200 12 1.200z" fill="#12a876"/><circle cx="12" cy="10" r="5.600" fill="#ecfdf5"/><circle cx="12" cy="10" r="3.500" fill="#12a876"/><circle cx="10.600" cy="8.600" r="1.700" fill="#ecfdf5"/></svg><span>View</span></div></div>
<div class="r" id="r2" style="top:228.30px"><svg class="cal" width="22" height="24" preserveAspectRatio="none" viewBox="0 0 22 25" fill="#19b584"><rect x="4.300" y="0" width="3.400" height="6" rx="1.200"/><rect x="14.300" y="0" width="3.400" height="6" rx="1.200"/><path d="M2.600 3h16.800A2.600 2.600 0 0 1 22 5.600V8.300H0V5.600A2.600 2.600 0 0 1 2.600 3z"/><path d="M0 10h22v12.400a2.600 2.600 0 0 1-2.600 2.600H2.600A2.600 2.600 0 0 1 0 22.400z"/></svg><div class="dt">20 Nov 2025, 03:29</div><div class="rf">MW2025976690</div><div class="av">EE</div><div class="bn">Emeka Eze</div><div class="a1">GBP 1,000.00</div><div class="a2">NGN 1,250,000.00</div><div class="co">UK-Nigeria</div><div class="sp pe" style="width:220px"><svg width="21" height="21" viewBox="0 0 22 22"><circle cx="11" cy="11" r="10.700" fill="#f09c10"/><path d="M10.400 5.300v5.900l4.300 2.900" fill="none" stroke="#fef3c7" stroke-width="2.300" stroke-linecap="round" stroke-linejoin="round"/></svg><span>PROCESSING</span></div><div class="vb"><svg width="24" height="20" viewBox="0 0 24 20"><path d="M12 1.200C6.500 1.200 2.300 5.200.6 10c1.700 4.800 5.900 8.800 11.400 8.800s9.700-4 11.400-8.800C21.700 5.200 17.500 1.200 12 1.200z" fill="#12a876"/><circle cx="12" cy="10" r="5.600" fill="#ecfdf5"/><circle cx="12" cy="10" r="3.500" fill="#12a876"/><circle cx="10.600" cy="8.600" r="1.700" fill="#ecfdf5"/></svg><span>View</span></div></div>
<div class="r" id="r3" style="top:362.60px"><svg class="cal" width="22" height="24" preserveAspectRatio="none" viewBox="0 0 22 25" fill="#19b584"><rect x="4.300" y="0" width="3.400" height="6" rx="1.200"/><rect x="14.300" y="0" width="3.400" height="6" rx="1.200"/><path d="M2.600 3h16.800A2.600 2.600 0 0 1 22 5.600V8.300H0V5.600A2.600 2.600 0 0 1 2.600 3z"/><path d="M0 10h22v12.400a2.600 2.600 0 0 1-2.600 2.600H2.600A2.600 2.600 0 0 1 0 22.400z"/></svg><div class="dt">20 Nov 2025, 03:29</div><div class="rf">MW2025327175</div><div class="av">EE</div><div class="bn">Emeka Eze</div><div class="a1">GBP 250.00</div><div class="a2">NGN 312,500.00</div><div class="co">UK-Nigeria</div><div class="sp cm" style="width:214px"><svg width="21" height="21" viewBox="0 0 22 22"><circle cx="11" cy="11" r="10.700" fill="#12a876"/><path d="M6.600 11.400l2.900 2.900 5.800-5.900" fill="none" stroke="#d1fae5" stroke-width="2.500" stroke-linecap="round" stroke-linejoin="round"/></svg><span>COMPLETED</span></div><div class="vb"><svg width="24" height="20" viewBox="0 0 24 20"><path d="M12 1.200C6.500 1.200 2.300 5.200.6 10c1.700 4.800 5.900 8.800 11.400 8.800s9.700-4 11.400-8.800C21.700 5.200 17.500 1.200 12 1.200z" fill="#12a876"/><circle cx="12" cy="10" r="5.600" fill="#ecfdf5"/><circle cx="12" cy="10" r="3.500" fill="#12a876"/><circle cx="10.600" cy="8.600" r="1.700" fill="#ecfdf5"/></svg><span>View</span></div></div>
<div class="r" id="r4" style="top:496.90px"><svg class="cal" width="22" height="24" preserveAspectRatio="none" viewBox="0 0 22 25" fill="#19b584"><rect x="4.300" y="0" width="3.400" height="6" rx="1.200"/><rect x="14.300" y="0" width="3.400" height="6" rx="1.200"/><path d="M2.600 3h16.800A2.600 2.600 0 0 1 22 5.600V8.300H0V5.600A2.600 2.600 0 0 1 2.600 3z"/><path d="M0 10h22v12.400a2.600 2.600 0 0 1-2.600 2.600H2.600A2.600 2.600 0 0 1 0 22.400z"/></svg><div class="dt">19 Nov 2025, 03:29</div><div class="rf">MW2025500377</div><div class="av">NO</div><div class="bn">Ngozi Okonkwo</div><div class="a1">GBP 200.00</div><div class="a2">NGN 250,000.00</div><div class="co">UK-Nigeria</div><div class="sp cm" style="width:214px"><svg width="21" height="21" viewBox="0 0 22 22"><circle cx="11" cy="11" r="10.700" fill="#12a876"/><path d="M6.600 11.400l2.900 2.900 5.800-5.900" fill="none" stroke="#d1fae5" stroke-width="2.500" stroke-linecap="round" stroke-linejoin="round"/></svg><span>COMPLETED</span></div><div class="vb"><svg width="24" height="20" viewBox="0 0 24 20"><path d="M12 1.200C6.500 1.200 2.300 5.200.6 10c1.700 4.800 5.900 8.800 11.400 8.800s9.700-4 11.400-8.800C21.700 5.200 17.500 1.200 12 1.200z" fill="#12a876"/><circle cx="12" cy="10" r="5.600" fill="#ecfdf5"/><circle cx="12" cy="10" r="3.500" fill="#12a876"/><circle cx="10.600" cy="8.600" r="1.700" fill="#ecfdf5"/></svg><span>View</span></div></div>
<div class="r" id="r5" style="top:631.20px"><svg class="cal" width="22" height="24" preserveAspectRatio="none" viewBox="0 0 22 25" fill="#19b584"><rect x="4.300" y="0" width="3.400" height="6" rx="1.200"/><rect x="14.300" y="0" width="3.400" height="6" rx="1.200"/><path d="M2.600 3h16.800A2.600 2.600 0 0 1 22 5.600V8.300H0V5.600A2.600 2.600 0 0 1 2.600 3z"/><path d="M0 10h22v12.400a2.600 2.600 0 0 1-2.600 2.600H2.600A2.600 2.600 0 0 1 0 22.400z"/></svg><div class="dt">19 Nov 2025, 03:29</div><div class="rf">MW2025271880</div><div class="av">NA</div><div class="bn">Ngozi Adeleke</div><div class="a1">AED 500.00</div><div class="a2">NGN 205,000.00</div><div class="co">UAE-Nigeria</div><div class="sp cm" style="width:214px"><svg width="21" height="21" viewBox="0 0 22 22"><circle cx="11" cy="11" r="10.700" fill="#12a876"/><path d="M6.600 11.400l2.900 2.900 5.800-5.900" fill="none" stroke="#d1fae5" stroke-width="2.500" stroke-linecap="round" stroke-linejoin="round"/></svg><span>COMPLETED</span></div><div class="vb"><svg width="24" height="20" viewBox="0 0 24 20"><path d="M12 1.200C6.500 1.200 2.300 5.200.6 10c1.700 4.800 5.900 8.800 11.400 8.800s9.700-4 11.400-8.800C21.700 5.200 17.500 1.200 12 1.200z" fill="#12a876"/><circle cx="12" cy="10" r="5.600" fill="#ecfdf5"/><circle cx="12" cy="10" r="3.500" fill="#12a876"/><circle cx="10.600" cy="8.600" r="1.700" fill="#ecfdf5"/></svg><span>View</span></div></div>
<div class="r" id="r6" style="top:765.50px"><svg class="cal" width="22" height="24" preserveAspectRatio="none" viewBox="0 0 22 25" fill="#19b584"><rect x="4.300" y="0" width="3.400" height="6" rx="1.200"/><rect x="14.300" y="0" width="3.400" height="6" rx="1.200"/><path d="M2.600 3h16.800A2.600 2.600 0 0 1 22 5.600V8.300H0V5.600A2.600 2.600 0 0 1 2.600 3z"/><path d="M0 10h22v12.400a2.600 2.600 0 0 1-2.600 2.600H2.600A2.600 2.600 0 0 1 0 22.400z"/></svg><div class="dt">15 Nov 2025, 03:29</div><div class="rf">MW2025463721</div><div class="av">CO</div><div class="bn">Chukwudi Okafor</div><div class="a1">USD 300.00</div><div class="a2">NGN 450,000.00</div><div class="co">US-Nigeria</div><div class="sp pe" style="width:220px"><svg width="21" height="21" viewBox="0 0 22 22"><circle cx="11" cy="11" r="10.700" fill="#f09c10"/><path d="M10.400 5.300v5.900l4.300 2.900" fill="none" stroke="#fef3c7" stroke-width="2.300" stroke-linecap="round" stroke-linejoin="round"/></svg><span>PROCESSING</span></div><div class="vb"><svg width="24" height="20" viewBox="0 0 24 20"><path d="M12 1.200C6.500 1.200 2.300 5.200.6 10c1.700 4.800 5.900 8.800 11.400 8.800s9.700-4 11.400-8.800C21.700 5.200 17.500 1.200 12 1.200z" fill="#12a876"/><circle cx="12" cy="10" r="5.600" fill="#ecfdf5"/><circle cx="12" cy="10" r="3.500" fill="#12a876"/><circle cx="10.600" cy="8.600" r="1.700" fill="#ecfdf5"/></svg><span>View</span></div></div>
<div class="r" id="r7" style="top:899.80px"><svg class="cal" width="22" height="24" preserveAspectRatio="none" viewBox="0 0 22 25" fill="#19b584"><rect x="4.300" y="0" width="3.400" height="6" rx="1.200"/><rect x="14.300" y="0" width="3.400" height="6" rx="1.200"/><path d="M2.600 3h16.800A2.600 2.600 0 0 1 22 5.600V8.300H0V5.600A2.600 2.600 0 0 1 2.600 3z"/><path d="M0 10h22v12.400a2.600 2.600 0 0 1-2.600 2.600H2.600A2.600 2.600 0 0 1 0 22.400z"/></svg><div class="dt">14 Nov 2025, 03:29</div><div class="rf">MW2025564261</div><div class="av">AE</div><div class="bn">Adaeze Eze</div><div class="a1">CAD 500.00</div><div class="a2">NGN 550,000.00</div><div class="co">Canada-Nigeria</div><div class="sp pe" style="width:176px"><svg width="21" height="21" viewBox="0 0 22 22"><circle cx="11" cy="11" r="10.700" fill="#f09c10"/><path d="M10.400 5.300v5.900l4.300 2.900" fill="none" stroke="#fef3c7" stroke-width="2.300" stroke-linecap="round" stroke-linejoin="round"/></svg><span>PENDING</span></div><div class="vb"><svg width="24" height="20" viewBox="0 0 24 20"><path d="M12 1.200C6.500 1.200 2.300 5.200.6 10c1.700 4.800 5.900 8.800 11.400 8.800s9.700-4 11.400-8.800C21.700 5.200 17.500 1.200 12 1.200z" fill="#12a876"/><circle cx="12" cy="10" r="5.600" fill="#ecfdf5"/><circle cx="12" cy="10" r="3.500" fill="#12a876"/><circle cx="10.600" cy="8.600" r="1.700" fill="#ecfdf5"/></svg><span>View</span></div></div>
<div class="r" id="r8" style="top:1034.10px"><svg class="cal" width="22" height="24" preserveAspectRatio="none" viewBox="0 0 22 25" fill="#19b584"><rect x="4.300" y="0" width="3.400" height="6" rx="1.200"/><rect x="14.300" y="0" width="3.400" height="6" rx="1.200"/><path d="M2.600 3h16.800A2.600 2.600 0 0 1 22 5.600V8.300H0V5.600A2.600 2.600 0 0 1 2.600 3z"/><path d="M0 10h22v12.400a2.600 2.600 0 0 1-2.600 2.600H2.600A2.600 2.600 0 0 1 0 22.400z"/></svg><div class="dt">13 Nov 2025, 03:29</div><div class="rf">MW2025287542</div><div class="av">CO</div><div class="bn">Chukwudi Okafor</div><div class="a1">CAD 200.00</div><div class="a2">NGN 220,000.00</div><div class="co">Canada-Nigeria</div><div class="sp pe" style="width:176px"><svg width="21" height="21" viewBox="0 0 22 22"><circle cx="11" cy="11" r="10.700" fill="#f09c10"/><path d="M10.400 5.300v5.900l4.300 2.900" fill="none" stroke="#fef3c7" stroke-width="2.300" stroke-linecap="round" stroke-linejoin="round"/></svg><span>PENDING</span></div><div class="vb"><svg width="24" height="20" viewBox="0 0 24 20"><path d="M12 1.200C6.500 1.200 2.300 5.200.6 10c1.700 4.800 5.900 8.800 11.400 8.800s9.700-4 11.400-8.800C21.700 5.200 17.500 1.200 12 1.200z" fill="#12a876"/><circle cx="12" cy="10" r="5.600" fill="#ecfdf5"/><circle cx="12" cy="10" r="3.500" fill="#12a876"/><circle cx="10.600" cy="8.600" r="1.700" fill="#ecfdf5"/></svg><span>View</span></div></div>
</div>
</body></html>
